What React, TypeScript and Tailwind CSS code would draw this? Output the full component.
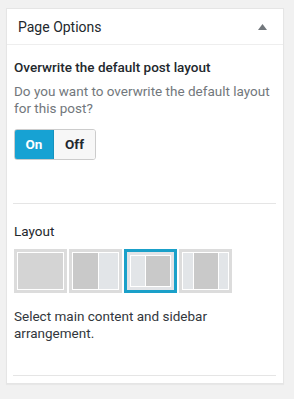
import React from "react";

const F = { fontFamily: 'Roboto, "Noto Sans", Arial, sans-serif' };

function LayoutIcon({ kind, selected }: { kind: "full" | "right" | "left" | "both"; selected?: boolean }) {
  return (
    <div
      className={
        "w-[53px] h-[44px] flex p-[3px] " +
        (selected ? "bg-[#e2e4e7] border-[3px] border-[#1aa0c9] p-[1px]" : "bg-[#dcdcdc]")
      }
    >
      <div className="flex-1 border border-white flex">
        {kind === "full" && <div className="flex-1 bg-[#d4d4d4]" />}
        {kind === "right" && (
          <>
            <div className="w-[25px] bg-[#c9c9c9]" />
            <div className="w-px bg-white" />
            <div className="flex-1 bg-[#e2e5e8]" />
          </>
        )}
        {kind === "left" && (
          <>
            <div className="w-[14px] bg-[#e2e5e8]" />
            <div className="w-px bg-white" />
            <div className="flex-1 bg-[#c9c9c9]" />
          </>
        )}
        {kind === "both" && (
          <>
            <div className="w-[10px] bg-[#e2e5e8]" />
            <div className="w-px bg-white" />
            <div className="flex-1 bg-[#c9c9c9]" />
            <div className="w-px bg-white" />
            <div className="w-[9px] bg-[#e2e5e8]" />
          </>
        )}
      </div>
    </div>
  );
}

export default function App() {
  return (
    <div className="w-[294px] h-[399px] bg-[#f1f1f1] pt-[8px] pl-[6px]" style={F}>
      <div className="w-[278px] bg-white border border-[#e5e5e5] shadow-[0_1px_1px_rgba(0,0,0,0.04)]">
        <div className="h-[36px] border-b border-[#eeeeee] flex items-center justify-between pl-[11px] pr-[16px]">
          <span className="text-[14px] text-[#23282d] leading-none">Page Options</span>
          <svg width="9" height="6" viewBox="0 0 9 6">
            <path d="M4.5 0 L9 6 L0 6 Z" fill="#72777c" />
          </svg>
        </div>
        <div className="px-[6px] pr-[7px]">
          <div className="px-[1px] pt-[13px]">
            <div className="text-[13.5px] font-medium text-[#23282d] leading-[18px]">
              Overwrite the default post layout
            </div>
            <div className="text-[13.5px] text-[#72777c] leading-[17px] mt-[7px]">
              Do you want to overwrite the default layout for this post?
            </div>
            <div className="flex mt-[12px] h-[31px] w-[82px] rounded-[3px] overflow-hidden border border-[#cccccc]">
              <div className="w-[40px] bg-[#17a2d3] text-white font-bold text-[13.5px] flex items-center justify-center -m-px mr-0 border border-[#1592be] rounded-l-[3px]">
                On
              </div>
              <div className="flex-1 bg-[#f7f7f7] text-[#23282d] font-bold text-[13.5px] flex items-center justify-center">
                Off
              </div>
            </div>
          </div>
          <div className="h-px bg-[#e5e5e5] mt-[43px]" />
          <div className="px-[1px] pt-[18px]">
            <div className="text-[13.5px] text-[#23282d] leading-[18px]">Layout</div>
            <div className="flex gap-[2px] mt-[9px]">
              <LayoutIcon kind="full" />
              <LayoutIcon kind="right" />
              <LayoutIcon kind="left" selected />
              <LayoutIcon kind="both" />
            </div>
            <div className="text-[13.5px] text-[#32373c] leading-[17px] mt-[15px]">
              Select main content and sidebar arrangement.
            </div>
          </div>
          <div className="h-px bg-[#e5e5e5] mt-[33px]" />
          <div className="h-[7px]" />
        </div>
      </div>
    </div>
  );
}
